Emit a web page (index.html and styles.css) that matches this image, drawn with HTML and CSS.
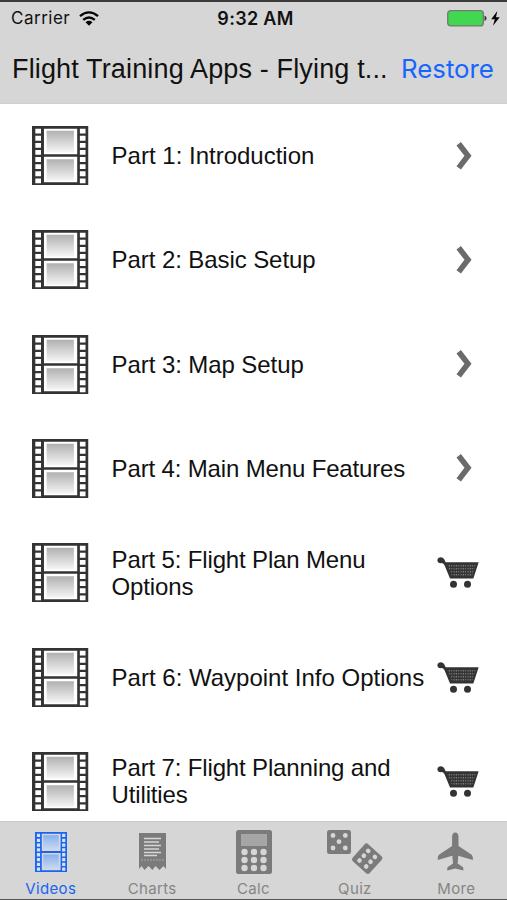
FILE: index.html
```html
<!DOCTYPE html>
<html lang="en">
<head>
<meta charset="utf-8">
<title>Flight Training Apps</title>
<link rel="stylesheet" href="styles.css">
</head>
<body>
<svg class="defs" aria-hidden="true">
  <defs>
    <linearGradient id="shade" x1="0" y1="0" x2="0" y2="1"><stop offset="0" stop-color="#b0b0b0"/><stop offset="1" stop-color="#f5f5f5"/></linearGradient>
    <linearGradient id="blue" x1="0" y1="0" x2="0" y2="1"><stop offset="0" stop-color="#86b0f2"/><stop offset="1" stop-color="#cbd9ee"/></linearGradient>
    <pattern id="mesh" width="7" height="9" patternUnits="userSpaceOnUse"><circle cx="3" cy="5" r="1.800" fill="#999"/></pattern>
    <symbol id="film" viewBox="36 32 170 176" preserveAspectRatio="none">
      <path fill="currentColor" fill-rule="evenodd" d="M36 32H206V208H36ZM72 40V116H172V40ZM72 124V200H172V124Z"/>
      <g class="film-hole" stroke-width="17" stroke-dasharray="14.500 6.700">
        <path d="M54.500 40V204M188.500 40V204"/>
      </g>
      <path class="film-panel" d="M80 46H162V110H80Z"/>
      <path class="film-panel" d="M80 131H162V195H80Z"/>
    </symbol>
    <symbol id="chevron" viewBox="0 0 18 32"><path d="M3.700 3.700L13 15.800L3.700 27.900" fill="none" stroke="#6b6b6b" stroke-width="5.600"/></symbol>
    <symbol id="cart" viewBox="36 48 126 98">
      <path d="M37 60C38 49 53 48 58 58L62 66H161L145 115H75L59 76Q54 67 47 69Q38 69 37 60Z" fill="#333"/>
      <path d="M67 73H153L141 109H81Z" fill="url(#mesh)"/>
      <circle cx="85.500" cy="132" r="10.500" fill="#333"/><circle cx="127.500" cy="132" r="10.500" fill="#333"/>
    </symbol>
  </defs>
</svg>
<div class="screen">
  <header class="top">
    <div class="status">
      <div class="carrier"><span>Carrier</span>
        <svg class="wifi" viewBox="0 0 20 15"><g fill="none" stroke="#050505" stroke-width="2.300"><path d="M1 5.200Q10-2.400 19 5.200M4.200 8.900Q10 4 15.800 8.900"/></g><path d="M6.500 11.200Q10 8.300 13.500 11.200L10 14.700Z" fill="#050505"/></svg>
      </div>
      <div class="time">9:32 AM</div>
      <div class="power">
        <svg class="battery" viewBox="0 0 40 17"><rect x=".7" y=".7" width="35.600" height="15.200" rx="3" fill="#42d751" stroke="#777" stroke-width="1.300"/><path d="M37.500 5.500Q39.500 6 39.500 8.300T37.500 11Z" fill="#333"/></svg>
        <svg class="bolt" viewBox="0 0 9 15"><path d="M6.300 0L.2 8.300H3.800L2 14.800L8.700 6.200H5Z" fill="#050505"/></svg>
      </div>
    </div>
    <div class="nav"><h1 class="title">Flight Training Apps - Flying t...</h1><span class="restore">Restore</span></div>
  </header>
  <main class="list">
    <div class="row"><svg class="film"><use href="#film"/></svg><span class="label">Part 1: Introduction</span><svg class="chevron"><use href="#chevron"/></svg></div>
    <div class="row"><svg class="film"><use href="#film"/></svg><span class="label snug">Part 2: Basic Setup</span><svg class="chevron"><use href="#chevron"/></svg></div>
    <div class="row"><svg class="film"><use href="#film"/></svg><span class="label snug">Part 3: Map Setup</span><svg class="chevron"><use href="#chevron"/></svg></div>
    <div class="row"><svg class="film"><use href="#film"/></svg><span class="label tight">Part 4: Main Menu Features</span><svg class="chevron"><use href="#chevron"/></svg></div>
    <div class="row"><svg class="film"><use href="#film"/></svg><span class="label tight">Part 5: Flight Plan Menu<br>Options</span><svg class="cart"><use href="#cart"/></svg></div>
    <div class="row"><svg class="film"><use href="#film"/></svg><span class="label">Part 6: Waypoint Info Options</span><svg class="cart"><use href="#cart"/></svg></div>
    <div class="row"><svg class="film"><use href="#film"/></svg><span class="label tight">Part 7: Flight Planning and<br>Utilities</span><svg class="cart"><use href="#cart"/></svg></div>
  </main>
  <nav class="tabs">
    <div class="tab active"><svg class="icon" viewBox="0 0 64 46"><use href="#film" x="16" y="3" width="32" height="40"/></svg><span>Videos</span></div>
    <div class="tab"><svg class="icon" viewBox="0 0 64 46"><path fill="currentColor" d="M19 4H46V40L43.500 37L39.500 41L35.500 37L32.500 41L28.500 37L24.500 41L21.500 37L19 40Z"/><path d="M24 9.500H41M24 13H39M24 16.500H41M24 20H39M24 23.500H41M24 26.500H37" stroke="#d6d6d6" stroke-width="1.500"/><path d="M21 31H44" stroke="#aaa" stroke-dasharray="2 1"/></svg><span>Charts</span></div>
    <div class="tab"><svg class="icon" viewBox="0 0 64 46"><rect x="14" y="1" width="36" height="44" rx="2.500" fill="currentColor"/><path d="M19 5H45V17H19Z" fill="#a6a6a6"/><g fill="#d6d6d6"><circle cx="22.500" cy="23" r="3.200"/><circle cx="32" cy="23" r="3.200"/><circle cx="41.500" cy="23" r="3.200"/><circle cx="22.500" cy="31" r="3.200"/><circle cx="32" cy="31" r="3.200"/><circle cx="41.500" cy="31" r="3.200"/><circle cx="22.500" cy="39" r="3.200"/><circle cx="32" cy="39" r="3.200"/><circle cx="41.500" cy="39" r="3.200"/></g></svg><span>Calc</span></div>
    <div class="tab"><svg class="icon" viewBox="0 0 64 46"><rect x="4" y="1" width="24" height="24" rx="2.500" fill="currentColor"/><g fill="#d6d6d6"><circle cx="10" cy="6.500" r="2.400"/><circle cx="22.300" cy="6.500" r="2.400"/><circle cx="16" cy="12.700" r="2.400"/><circle cx="10" cy="19" r="2.400"/><circle cx="22.300" cy="19" r="2.400"/></g><g transform="translate(44.200 29.700) rotate(42)"><rect x="-11.500" y="-11.500" width="23" height="23" rx="2.500" fill="currentColor"/><g fill="#d6d6d6"><circle cx="-4.500" cy="-6.500" r="2.300"/><circle cx="4.500" cy="-6.500" r="2.300"/><circle cx="-4.500" cy="0" r="2.300"/><circle cx="4.500" cy="0" r="2.300"/><circle cx="-4.500" cy="6.500" r="2.300"/><circle cx="4.500" cy="6.500" r="2.300"/></g></g></svg><span>Quiz</span></div>
    <div class="tab"><svg class="icon" viewBox="0 0 64 46"><path fill="currentColor" d="M31.300 3.500Q34.500 3.500 34.500 8V17L47.300 25.500Q49.300 27 48.800 31L34.300 26.800L33.600 34.500L38.800 38Q39.800 39 39.300 41.500L31.300 39.500L23.300 41.500Q22.800 39 23.800 38L29 34.500L28.300 26.800L13.800 31Q13.300 27 15.300 25.500L28.100 17V8Q28.100 3.500 31.300 3.500Z"/></svg><span>More</span></div>
  </nav>
</div>
</body>
</html>
```
FILE: styles.css
```css
* { box-sizing: border-box; }
body { margin: 0; font-family: "Liberation Sans", Arial, sans-serif; color: #111; background: #fff; }
svg { display: block; flex: none; }
.defs { position: absolute; width: 0; height: 0; }
.screen { width: 507px; height: 900px; display: flex; flex-direction: column; overflow: hidden; border-top: 2px solid #3d3a3b; border-bottom: 1px solid #555; }
.top { height: 102px; flex: none; background: #d6d6d6; border-bottom: 1px solid #cfcfcf; }
.status { height: 32px; display: grid; grid-template-columns: 1fr 1fr 1fr; align-items: center; padding: 0 7px 0 11px; font-family: Inter, "Liberation Sans", sans-serif; font-size: 17px; }
.carrier { display: flex; align-items: center; gap: 9px; letter-spacing: .5px; }
.wifi { width: 20px; height: 15px; }
.time { text-align: center; font-size: 18px; letter-spacing: .3px; font-weight: 600; white-space: nowrap; }
.power { display: flex; justify-content: flex-end; align-items: center; gap: 4px; }
.battery { width: 40px; height: 17px; }
.bolt { width: 9px; height: 15px; }
.nav { display: flex; height: 69px; align-items: center; padding: 0 12px; white-space: nowrap; }
.title { width: 389px; margin: 0; font-size: 27px; font-weight: 400; letter-spacing: .15px; padding-top: 2px; }
.restore { color: #1765ff; font: 25.8px Inter, sans-serif; }
.list { flex: 1; min-height: 0; overflow: hidden; }
.row { height: 104.3px; display: flex; align-items: center; padding-left: 32px; }
.list .row:first-child { margin-top: -.6px; }
.film { width: 56.5px; height: 59px; color: #333; --hole: #fff; --panel: url(#shade); }
.film-hole { fill: none; stroke: var(--hole); }
.film-panel { fill: var(--panel); }
.label { width: 325px; margin-left: 23.1px; font-size: 24px; line-height: 27px; white-space: nowrap; }
.snug { letter-spacing: -.08px; }
.tight { letter-spacing: -.15px; }
.chevron { width: 18px; height: 32px; margin-left: 18px; }
.cart { width: 42px; height: 33px; }
.tabs { height: 78px; flex: none; display: flex; background: #d6d6d6; border-top: 1px solid #c9c9c9; }
.tab { flex: 1; display: flex; flex-direction: column; align-items: center; padding-top: 7px; color: #7b7b7b; font: 15px/18px Inter, sans-serif; letter-spacing: .35px; }
.icon { width: 64px; height: 46px; margin-bottom: 5px; }
.tab span { color: #858585; }
.active { color: #1765f0; --hole: #d6e0f0; --panel: url(#blue); }
.active span { color: #1765f0; }
```
